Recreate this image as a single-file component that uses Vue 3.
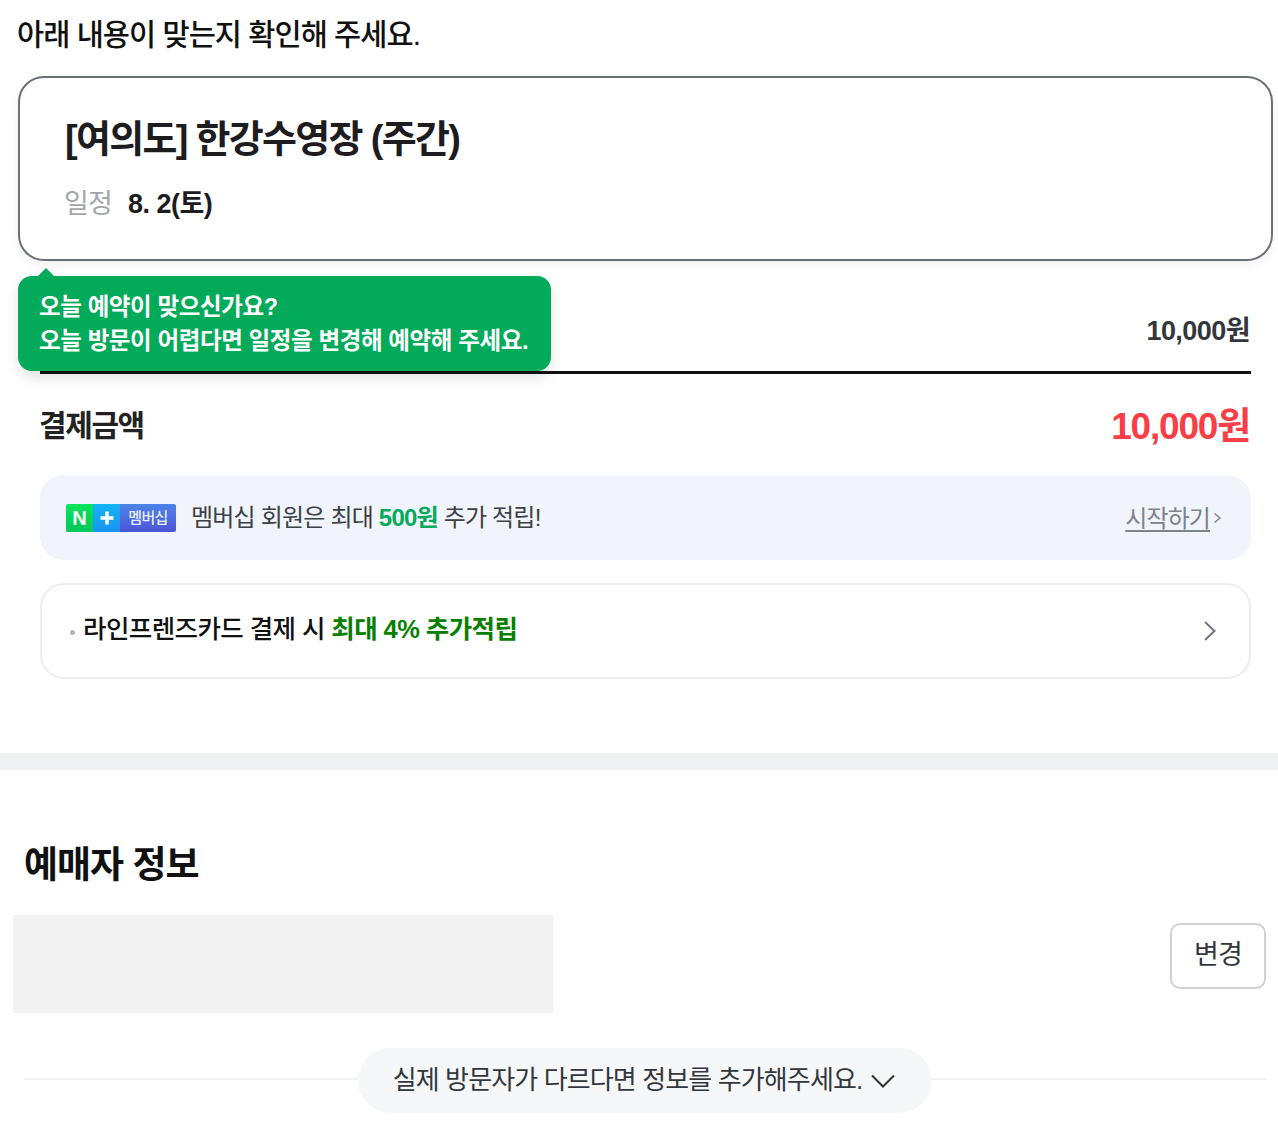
<script setup>
const title = '[여의도] 한강수영장 (주간)'
</script>

<template>
  <div class="page">
    <p class="lead">아래 내용이 맞는지 확인해 주세요.</p>

    <div class="wrap-card">
      <section class="ticket">
        <h1 class="title">{{ title }}</h1>
        <div class="sched"><span class="sched-label">일정</span><strong class="sched-val">8. 2(토)</strong></div>
      </section>
      <div class="tip">
        <i class="tip-arrow"></i>
        <p>오늘 예약이 맞으신가요?</p>
        <p>오늘 방문이 어렵다면 일정을 변경해 예약해 주세요.</p>
      </div>
    </div>

    <div class="pay">
      <div class="price-row"><span class="price">10,000원</span></div>
      <div class="total-row">
        <span class="total-label">결제금액</span>
        <span class="total">10,000원</span>
      </div>

      <div class="member">
        <span class="badge">
          <span class="b-n">N</span>
          <span class="b-plus">
            <svg width="16" height="16" viewBox="0 0 16 16"><path d="M8 1.500v13M1.500 8h13" stroke="#fff" stroke-width="3.4" fill="none"/></svg>
          </span>
          <span class="b-txt">멤버십</span>
        </span>
        <span class="member-text">멤버십 회원은 최대 <b>500원</b> 추가 적립!</span>
        <span class="start"><u>시작하기</u><svg class="start-arrow" width="9" height="14" viewBox="0 0 9 14"><path d="M1.500 2.500 7 7l-5.500 4.500" stroke="#808791" stroke-width="1.500" fill="none"/></svg></span>
      </div>

      <div class="card-row">
        <span class="dot"></span>
        <span class="card-text">라인프렌즈카드 결제 시 <b>최대 4% 추가적립</b></span>
        <svg class="card-arrow" width="14" height="22" viewBox="0 0 14 22"><path d="M2 2l9.500 9L2 20" stroke="#6f7680" stroke-width="2" fill="none"/></svg>
      </div>
    </div>

    <div class="band"></div>

    <h2 class="sub">예매자 정보</h2>

    <div class="booker">
      <div class="mask"></div>
      <button class="change">변경</button>
    </div>

    <div class="add">
      <span class="add-pill"><span class="add-text">실제 방문자가 다르다면 정보를 추가해주세요.</span>
        <svg width="26" height="16" viewBox="0 0 26 16"><path d="M2 2.500l11 11 11-11" stroke="#333" stroke-width="2" fill="none"/></svg>
      </span>
    </div>
  </div>
</template>

<style>
html, body { margin: 0; background: #fff; }
</style>

<style scoped>
.page {
  width: 1278px;
  height: 1125px;
  overflow: hidden;
  font-family: "Liberation Sans", "Noto Sans CJK KR", sans-serif;
  color: #111;
  display: flex;
  flex-direction: column;
}
p, h1, h2 { margin: 0; }
.lead {
  padding: 16px 0 0 17px;
  font-size: 29.500px;
  line-height: 38px;
  letter-spacing: -0.95px;
  font-weight: 500;
  height: 61px;
  box-sizing: border-box;
  color: #111;
}
.wrap-card { position: relative; margin: 15px 5px 0 18px; }
.ticket {
  height: 185px;
  box-sizing: border-box;
  border: 2.500px solid #6b7078;
  border-radius: 26px;
  padding: 36px 0 0 45px;
  background: #fff;
  box-shadow: 0 4px 12px rgba(0,0,0,.06);
}
.title {
  font-size: 38px;
  line-height: 50px;
  letter-spacing: -1.700px;
  font-weight: 700;
  color: #1d1d1f;
}
.sched { margin-top: 22px; display: flex; align-items: center; gap: 16px; line-height: 36px; }
.sched-label { font-size: 27px; color: #a3a6ab; letter-spacing: -0.9px; margin-left: -1px; }
.sched-val { font-size: 27px; color: #1c1c1e; letter-spacing: -0.5px; font-weight: 700; }
.tip {
  position: absolute;
  left: 0;
  top: 200px;
  width: 533px;
  height: 95px;
  box-sizing: border-box;
  padding: 14px 0 0 21px;
  background: #03aa5a;
  border-radius: 14px;
  color: #fff;
  font-size: 23.500px;
  line-height: 34px;
  font-weight: 700;
  letter-spacing: -0.38px;
  box-shadow: 0 6px 14px rgba(0,0,0,.12);
  z-index: 2;
}
.tip-arrow {
  position: absolute;
  left: 19px;
  top: -8px;
  width: 0;
  height: 0;
  border-left: 9px solid transparent;
  border-right: 9px solid transparent;
  border-bottom: 9px solid #03aa5a;
}
.pay { margin: 0 27px 0 40px; }
.price-row {
  height: 113px;
  box-sizing: border-box;
  border-bottom: 3px solid #111;
  display: flex;
  justify-content: flex-end;
  padding: 52px 1px 0 0;
}
.price { font-size: 27px; line-height: 36px; font-weight: 700; color: #33373d; letter-spacing: -0.55px; }
.total-row {
  display: flex;
  justify-content: space-between;
  align-items: center;
  height: 101px;
  padding: 0 1px 4px 0;
  box-sizing: border-box;
}
.total-label { font-size: 30px; font-weight: 700; color: #222; letter-spacing: -1.400px; margin-left: -1px; }
.total { font-size: 37px; font-weight: 700; color: #f93e45; letter-spacing: -1.200px; }
.member {
  height: 85px;
  background: #f1f4fb;
  border-radius: 24px;
  display: flex;
  align-items: center;
  padding: 0 29px 0 26px;
}
.badge {
  display: flex;
  width: 110px;
  height: 28px;
  border-radius: 2px;
  overflow: hidden;
  flex: none;
}
.b-n {
  width: 27px;
  background: linear-gradient(#06e55c, #03c75a);
  color: #fff;
  font-size: 20px;
  font-weight: 700;
  line-height: 28px;
  text-align: center;
}
.b-plus {
  width: 27px;
  background: linear-gradient(#14b4f5, #1a94f0);
  display: flex;
  align-items: center;
  justify-content: center;
}
.b-txt {
  flex: 1;
  background: linear-gradient(#4b84e8, #4d55d8);
  color: #e8eefc;
  font-size: 15px;
  font-weight: 500;
  line-height: 28px;
  text-align: center;
  letter-spacing: -0.6px;
}
.member-text {
  margin: 0 0 4px 15px;
  font-size: 24px;
  color: #3c4047;
  letter-spacing: -0.8px;
  flex: 1;
}
.member-text b { color: #03aa5a; font-weight: 700; }
.start { display: flex; align-items: center; gap: 3px; font-size: 24px; color: #7d838c; letter-spacing: -0.9px; margin: 0 0 3px -1px; }
.start u { text-underline-offset: 3px; }
.start-arrow { margin-top: 4px; }
.card-row {
  margin-top: 23px;
  height: 96px;
  box-sizing: border-box;
  border: 2px solid #eeeeef;
  border-radius: 24px;
  display: flex;
  align-items: center;
  padding: 0 32px 0 28px;
}
.dot { width: 5px; height: 5px; border-radius: 50%; background: #b5b5b5; margin-right: 8px; flex: none; margin-top: 2px; }
.card-text {
  flex: 1;
  font-size: 25.500px;
  font-weight: 500;
  color: #111;
  letter-spacing: -0.58px;
  margin-bottom: 9px;
}
.card-text b { color: #078000; font-weight: 700; }
.band { margin-top: 74px; height: 17px; background: #f0f1f3; flex: none; }
.sub {
  margin: 72px 0 0 24px;
  font-size: 37px;
  line-height: 48px;
  font-weight: 700;
  letter-spacing: -1px;
  color: #111;
}
.booker {
  margin: 25px 12px 0 13px;
  display: flex;
  justify-content: space-between;
  align-items: flex-start;
}
.mask { width: 540px; height: 98px; background: #f2f2f2; }
.change {
  margin-top: 8px;
  width: 96px;
  height: 66px;
  background: #fff;
  border: 2px solid #cfd1d4;
  border-radius: 10px;
  font-family: inherit;
  font-size: 27px;
  color: #33373d;
  letter-spacing: -0.8px;
  padding: 0 0 8px;
}
.add {
  margin: 35px 11px 0 24px;
  position: relative;
  display: flex;
  justify-content: center;
  padding-right: 1px;
  background: linear-gradient(#f3f3f4, #f3f3f4) 0 30px / 100% 2px no-repeat;
}
.add-pill {
  width: 574px;
  height: 65px;
  box-sizing: border-box;
  margin-left: -1px;
  border-radius: 33px;
  background: #f6f7f9;
  display: flex;
  align-items: center;
  justify-content: center;
  gap: 8px;
  font-size: 26px;
  color: #33373d;
  letter-spacing: -0.87px;
}
.add-text { margin-bottom: 6px; }
</style>
